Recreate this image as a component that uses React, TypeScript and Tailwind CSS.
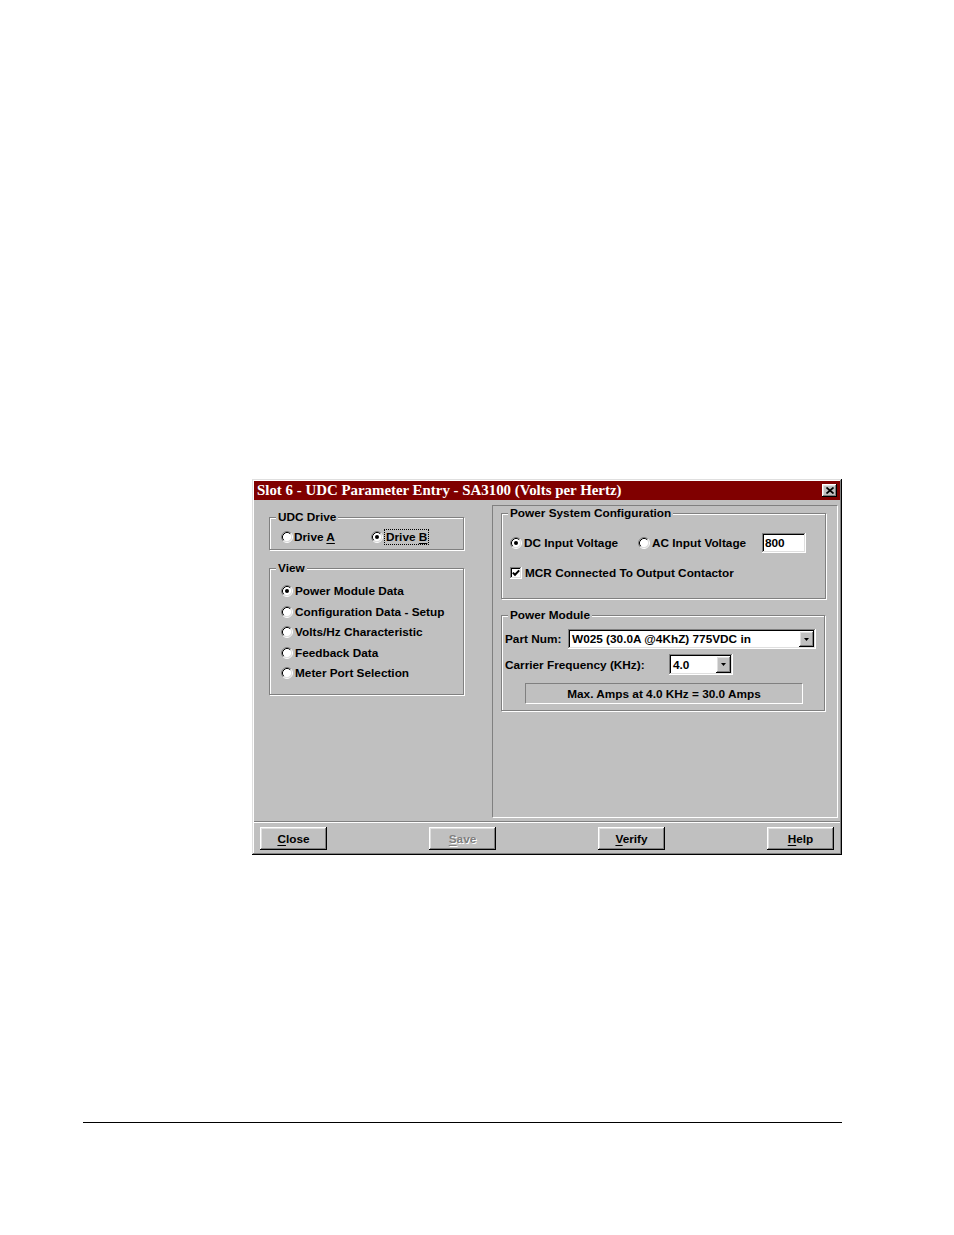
import React from "react";

// Win95-style bevels
const raised =
  "shadow-[inset_-1px_-1px_0_#000,inset_1px_1px_0_#fff,inset_-2px_-2px_0_#808080,inset_2px_2px_0_#dfdfdf]";
const sunken =
  "shadow-[inset_-1px_-1px_0_#fff,inset_1px_1px_0_#808080,inset_-2px_-2px_0_#dfdfdf,inset_2px_2px_0_#000]";

function Radio({ checked = false }: { checked?: boolean }) {
  return (
    <svg width="12" height="12" viewBox="0 0 12 12" className="shrink-0">
      <circle cx="6" cy="6" r="4.5" fill="#fff" />
      <path d="M2.11 9.89A5.5 5.5 0 0 1 9.89 2.11" stroke="#808080" fill="none" />
      <path d="M9.89 2.11A5.5 5.5 0 0 1 2.11 9.89" stroke="#fff" fill="none" />
      <path d="M2.82 9.18A4.5 4.5 0 0 1 9.18 2.82" stroke="#000" fill="none" />
      <path d="M9.18 2.82A4.5 4.5 0 0 1 2.82 9.18" stroke="#dfdfdf" fill="none" />
      {checked && <circle cx="6" cy="6" r="2" fill="#000" />}
    </svg>
  );
}

function Checkbox() {
  return (
    <div className={`flex h-[12px] w-[12px] shrink-0 items-center justify-center bg-white ${sunken}`}>
      <svg width="8" height="8" viewBox="0 0 8 8">
        <path d="M0.8 3.6L3 5.8L7.2 1.4" stroke="#000" strokeWidth="2" fill="none" />
      </svg>
    </div>
  );
}

function DropButton() {
  return (
    <div className={`flex h-full w-[15px] shrink-0 items-center justify-center bg-[#c0c0c0] ${raised}`}>
      <svg width="5" height="3" viewBox="0 0 5 3">
        <path d="M0 0h5L2.5 3z" fill="#000" />
      </svg>
    </div>
  );
}

function Group({
  label,
  className,
  children,
}: {
  label: string;
  className?: string;
  children?: React.ReactNode;
}) {
  return (
    <div
      className={`relative border border-[#808080] shadow-[inset_1px_1px_0_#fff,1px_1px_0_#fff] ${className ?? ""}`}
    >
      <span className="absolute left-[6px] top-[-8px] bg-[#c0c0c0] px-[2px] leading-[14px]">
        {label}
      </span>
      {children}
    </div>
  );
}

function Button({
  label,
  underline,
  disabled = false,
}: {
  label: string;
  underline: number;
  disabled?: boolean;
}) {
  return (
    <div
      className={`flex h-[23px] w-[67px] items-center justify-center bg-[#c0c0c0] ${raised} ${
        disabled ? "text-[#808080] [text-shadow:1px_1px_0_#fff]" : "text-black"
      }`}
    >
      <span>
        {label.slice(0, underline)}
        <span className="underline underline-offset-2">{label[underline]}</span>
        {label.slice(underline + 1)}
      </span>
    </div>
  );
}

const viewItems = [
  "Power Module Data",
  "Configuration Data - Setup",
  "Volts/Hz Characteristic",
  "Feedback Data",
  "Meter Port Selection",
];

export default function App() {
  return (
    <div className="min-h-[1235px] w-[954px] bg-white pt-[479px]">
      {/* Dialog */}
      <div
        className={`ml-[252px] flex h-[376px] w-[590px] flex-col bg-[#c0c0c0] p-[2px] font-['Liberation_Sans',Arial,sans-serif] text-[11.8px] font-bold leading-[14px] text-black shadow-[inset_-1px_-1px_0_#000,inset_1px_1px_0_#dfdfdf,inset_-2px_-2px_0_#808080,inset_2px_2px_0_#fff]`}
      >
        {/* Title bar */}
        <div className="flex h-[19px] shrink-0 items-center justify-between bg-[#800000] pl-[3px] pr-[3px]">
          <span className="font-['Liberation_Serif','Times_New_Roman',serif] text-[14.9px] font-bold leading-[19px] text-white">
            Slot 6 - UDC Parameter Entry - SA3100 (Volts per Hertz)
          </span>
          <div className={`flex h-[13px] w-[15px] items-center justify-center bg-[#c0c0c0] ${raised}`}>
            <svg width="8" height="7" viewBox="0 0 8 7">
              <path d="M0.5 0.5L7.5 6.5M7.5 0.5L0.5 6.5" stroke="#000" strokeWidth="1.7" />
            </svg>
          </div>
        </div>

        {/* Body */}
        <div className="flex h-[318px] shrink-0">
          {/* Left column */}
          <div className="w-[238px] shrink-0 pl-[15px] pt-[17px]">
            <Group label="UDC Drive" className="h-[33px] w-[195px]">
              <div className="flex items-center pl-[11px] pt-[11px]">
                <div className="flex w-[90px] items-center gap-[1px]">
                  <Radio />
                  <span>
                    Drive <span className="underline underline-offset-2">A</span>
                  </span>
                </div>
                <div className="flex items-center gap-[1px]">
                  <Radio checked />
                  <span className="border border-dotted border-black px-[1px] leading-[14px]">
                    Drive <span className="underline underline-offset-2">B</span>
                  </span>
                </div>
              </div>
            </Group>

            <Group label="View" className="mt-[18px] h-[127px] w-[195px]">
              <div className="flex flex-col pl-[11px] pt-[12px]">
                {viewItems.map((item, i) => (
                  <div key={item} className="flex h-[20.5px] items-center gap-[2px]">
                    <Radio checked={i === 0} />
                    <span>{item}</span>
                  </div>
                ))}
              </div>
            </Group>
          </div>

          {/* Right frame */}
          <div className="mt-[5px] h-[313px] w-[346px] shrink-0 border border-[#808080] border-b-white border-r-white pl-[8px] pt-[7px]">
            <Group label="Power System Configuration" className="h-[86px] w-[325px]">
              <div className="flex flex-col pl-[8px] pt-[19px]">
                <div className="flex h-[20px] items-center">
                  <div className="flex w-[128px] items-center gap-[2px]">
                    <Radio checked />
                    <span>DC Input Voltage</span>
                  </div>
                  <div className="flex w-[124px] items-center gap-[2px]">
                    <Radio />
                    <span>AC Input Voltage</span>
                  </div>
                  <div className={`flex h-[20px] w-[44px] items-center bg-white pl-[3px] ${sunken}`}>
                    800
                  </div>
                </div>
                <div className="mt-[13px] flex items-center gap-[3px]">
                  <Checkbox />
                  <span>MCR Connected To Output Contactor</span>
                </div>
              </div>
            </Group>

            <Group label="Power Module" className="mt-[16px] h-[96px] w-[324px]">
              <div className="flex flex-col pl-[3px] pt-[13px]">
                <div className="flex h-[20px] items-center">
                  <span className="w-[63px] shrink-0">Part Num:</span>
                  <div className={`flex h-[20px] w-[248px] items-center bg-white p-[2px] ${sunken}`}>
                    <span className="flex-1 pl-[2px]">W025 (30.0A @4KhZ) 775VDC in</span>
                    <DropButton />
                  </div>
                </div>
                <div className="mt-[5px] flex h-[21px] items-center">
                  <span className="w-[164px] shrink-0">Carrier Frequency (KHz):</span>
                  <div className={`flex h-[21px] w-[64px] items-center bg-white p-[2px] ${sunken}`}>
                    <span className="flex-1 pl-[2px]">4.0</span>
                    <DropButton />
                  </div>
                </div>
                <div className="ml-[20px] mt-[8px] flex h-[21px] w-[278px] items-center justify-center border border-[#808080] border-b-white border-r-white">
                  Max. Amps at 4.0 KHz = 30.0 Amps
                </div>
              </div>
            </Group>
          </div>
        </div>

        {/* Separator */}
        <div className="mt-[3px] h-[2px] shrink-0 border-t border-[#808080] border-b border-b-white" />

        {/* Buttons */}
        <div className="mt-[4px] flex justify-between px-[6px]">
          <Button label="Close" underline={0} />
          <Button label="Save" underline={0} disabled />
          <Button label="Verify" underline={0} />
          <Button label="Help" underline={0} />
        </div>
      </div>

      {/* Page rule */}
      <div className="ml-[83px] mt-[267px] h-px w-[759px] bg-black" />
    </div>
  );
}
